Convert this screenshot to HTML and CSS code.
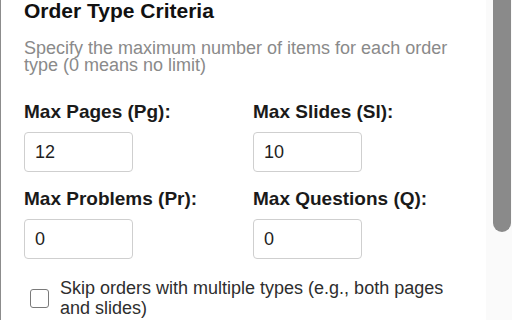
FILE: index.html
```html
<!DOCTYPE html>
<html lang="en">
<head>
<meta charset="utf-8">
<title>Order Type Criteria</title>
<link rel="stylesheet" href="styles.css">
</head>
<body>
<div class="app">
  <section class="panel">
    <h2 class="title">Order Type Criteria</h2>
    <p class="desc">Specify the maximum number of items for each order type (0 means no limit)</p>
    <div class="grid">
      <div class="field">
        <label class="label" for="pg">Max Pages (Pg):</label>
        <input class="num" id="pg" type="text" value="12">
      </div>
      <div class="field">
        <label class="label" for="sl">Max Slides (Sl):</label>
        <input class="num" id="sl" type="text" value="10">
      </div>
      <div class="field">
        <label class="label" for="pr">Max Problems (Pr):</label>
        <input class="num" id="pr" type="text" value="0">
      </div>
      <div class="field">
        <label class="label" for="q">Max Questions (Q):</label>
        <input class="num" id="q" type="text" value="0">
      </div>
    </div>
    <label class="check">
      <input class="box" type="checkbox">
      <span class="check-text">Skip orders with multiple types (e.g., both pages and slides)</span>
    </label>
  </section>
  <div class="track"><div class="thumb"></div></div>
</div>
</body>
</html>
```
FILE: styles.css
```css
html, body {
  margin: 0;
  padding: 0;
  background: #ffffff;
  font-family: "Liberation Sans", Arial, sans-serif;
}
.app {
  display: flex;
  height: 320px;
  overflow: hidden;
}
.panel {
  flex: 1;
  border-left: 1px solid #8c8c8c;
  padding: 0 24px 0 23px;
}
.title {
  margin: 0;
  font-size: 21px;
  line-height: 22px;
  font-weight: bold;
  color: #111111;
}
.desc {
  margin: 18px 0 0;
  font-size: 18px;
  line-height: 17px;
  color: #8a8a8a;
}
.grid {
  margin-top: 27px;
  display: grid;
  grid-template-columns: 209px 209px;
  column-gap: 20px;
  row-gap: 16px;
}
.field {
  display: flex;
  flex-direction: column;
  align-items: flex-start;
}
.label {
  font-size: 19px;
  line-height: 22px;
  font-weight: bold;
  color: #1a1a1a;
  margin-bottom: 9px;
}
.num {
  box-sizing: border-box;
  width: 109px;
  height: 40px;
  margin: 0;
  padding: 0 10px;
  border: 1px solid #cfcfcf;
  border-radius: 4px;
  font-family: "Liberation Sans", Arial, sans-serif;
  font-size: 18px;
  color: #1e1e1e;
  background: #fff;
}
.check {
  margin-top: 19px;
  display: flex;
  align-items: center;
  column-gap: 11px;
  padding-left: 6px;
}
.box {
  appearance: none;
  -webkit-appearance: none;
  flex: none;
  box-sizing: border-box;
  width: 19px;
  height: 19px;
  margin: 0;
  border: 1.5px solid #7a7a7a;
  border-radius: 3px;
  background: #fff;
}
.check-text {
  font-size: 18px;
  line-height: 20px;
  color: #2e2e2e;
}
.track {
  flex: none;
  width: 32px;
  background: #fafafa;
}
.thumb {
  margin-left: 7px;
  width: 18px;
  height: 232px;
  background: #8a8a8a;
  border-radius: 0 0 9px 9px;
}
```
